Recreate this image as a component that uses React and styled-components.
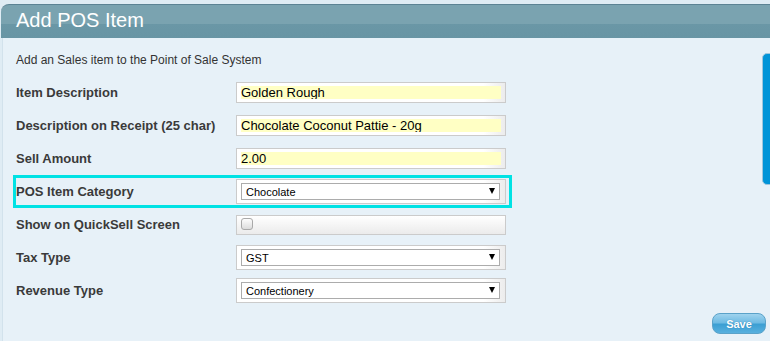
import React from 'react'
import styled, { createGlobalStyle } from 'styled-components'

const Global = createGlobalStyle`
  html, body {
    margin: 0;
    padding: 0;
    background: #e7f1f8;
    font-family: "Liberation Sans", Arial, sans-serif;
    overflow: hidden;
  }
`

const Page = styled.div`
  position: relative;
  width: 770px;
  height: 341px;
  padding-top: 4px;
  box-sizing: border-box;
  background: #dfecf4;
`

const Panel = styled.div`
  margin-left: 1px;
  height: 337px;
  display: flex;
  flex-direction: column;
`

const Header = styled.div`
  height: 34px;
  box-sizing: border-box;
  border-top: 1px solid #5c8394;
  border-radius: 8px 0 0 0;
  background: linear-gradient(#7aa3b0 0, #7aa3b0 19px, #6a97a6 19px, #6895a4 100%);
  color: #fff;
  font-size: 20px;
  line-height: 31px;
  padding-left: 15px;
`

const Body = styled.div`
  flex: 1;
  margin-left: 1px;
  border-left: 1px solid #d2e2ec;
  background: #e7f1f8;
  padding: 15px 0 0 10px;
  position: relative;
`

const Intro = styled.div`
  font-size: 12px;
  color: #333;
  padding-left: 3px;
  margin-bottom: 9px;
`

const Form = styled.div`
  display: flex;
  flex-direction: column;
  width: 499px;
`

const Row = styled.div`
  display: grid;
  grid-template-columns: 220px 270px;
  align-items: center;
  height: 33px;
  box-sizing: border-box;
  border: 3px solid ${p => (p.$active ? '#00e2e4' : 'transparent')};
`

const Label = styled.div`
  font-size: 13px;
  font-weight: bold;
  color: #3a3a3a;
`

const FieldBox = styled.div`
  box-sizing: border-box;
  border: 1px solid #cbcbcb;
  background: linear-gradient(90deg, #fff 0, #fff 92%, #ececec 100%);
  padding: ${p => p.$pad || '3px 4px'};
`

const TextInput = styled.input`
  display: block;
  width: 100%;
  height: 13px;
  box-sizing: border-box;
  border: 0;
  margin: 0;
  padding: 0;
  background: #ffffc4;
  font-family: "Liberation Sans", Arial, sans-serif;
  font-size: 13px;
  line-height: 13px;
  color: #000;
  outline: none;
`

const SelectWrap = styled.div`
  position: relative;
`

const Select = styled.select`
  appearance: none;
  display: block;
  width: 100%;
  height: 17px;
  box-sizing: border-box;
  border: 1px solid #acacac;
  border-radius: 0;
  background: #fff;
  margin: 0;
  padding: 0 0 0 4px;
  font-family: "Liberation Sans", Arial, sans-serif;
  font-size: 11px;
  color: #000;
  outline: none;
`

const Arrow = styled.span`
  position: absolute;
  right: 5px;
  top: 5px;
  width: 0;
  height: 0;
  border-left: 3.5px solid transparent;
  border-right: 3.5px solid transparent;
  border-top: 6px solid #000;
  pointer-events: none;
`

const CheckBox = styled.input`
  appearance: none;
  display: block;
  margin: 0;
  width: 12px;
  height: 12px;
  border: 1px solid #a9a9a9;
  border-radius: 3px;
  background: linear-gradient(#fdfdfd, #dcdcdc);
`

const CheckField = styled(FieldBox)`
  height: 20px;
  background: linear-gradient(#ffffff, #ebebeb);
`

const SideTab = styled.div`
  position: absolute;
  left: 759px;
  top: 15px;
  width: 14px;
  height: 132px;
  box-sizing: border-box;
  border: 1px solid #9fc6dd;
  border-radius: 5px;
  background: #0094d8;
`

const Footer = styled.div`
  display: flex;
  justify-content: flex-end;
  padding-right: 4px;
  margin-top: 6px;
`

const SaveButton = styled.button`
  width: 54px;
  height: 21px;
  border: 1px solid #5aa2c9;
  border-radius: 8px;
  background: linear-gradient(#9fd3ee 0, #6fbbe3 45%, #3c9fd3 55%, #58b0de 100%);
  color: #fff;
  font-family: "Liberation Sans", Arial, sans-serif;
  font-size: 11px;
  font-weight: bold;
  text-shadow: 0 0 1px #2a7fae;
  padding: 0;
`

const Field = ({ value }) => (
  <FieldBox>
    <TextInput defaultValue={value} />
  </FieldBox>
)

const Dropdown = ({ value }) => (
  <FieldBox $pad="3px 5px 3px 4px">
    <SelectWrap>
      <Select defaultValue={value}>
        <option>{value}</option>
      </Select>
      <Arrow />
    </SelectWrap>
  </FieldBox>
)

export default function App() {
  return (
    <Page>
      <Global />
      <Panel>
        <Header>Add POS Item</Header>
        <Body>
          <SideTab />
          <Intro>Add an Sales item to the Point of Sale System</Intro>
          <Form>
            <Row>
              <Label>Item Description</Label>
              <Field value="Golden Rough" />
            </Row>
            <Row>
              <Label>Description on Receipt (25 char)</Label>
              <Field value="Chocolate Coconut Pattie - 20g" />
            </Row>
            <Row>
              <Label>Sell Amount</Label>
              <Field value="2.00" />
            </Row>
            <Row $active>
              <Label>POS Item Category</Label>
              <Dropdown value="Chocolate" />
            </Row>
            <Row>
              <Label>Show on QuickSell Screen</Label>
              <CheckField $pad="2px 4px">
                <CheckBox type="checkbox" />
              </CheckField>
            </Row>
            <Row>
              <Label>Tax Type</Label>
              <Dropdown value="GST" />
            </Row>
            <Row>
              <Label>Revenue Type</Label>
              <Dropdown value="Confectionery" />
            </Row>
          </Form>
          <Footer>
            <SaveButton>Save</SaveButton>
          </Footer>
        </Body>
      </Panel>
    </Page>
  )
}
